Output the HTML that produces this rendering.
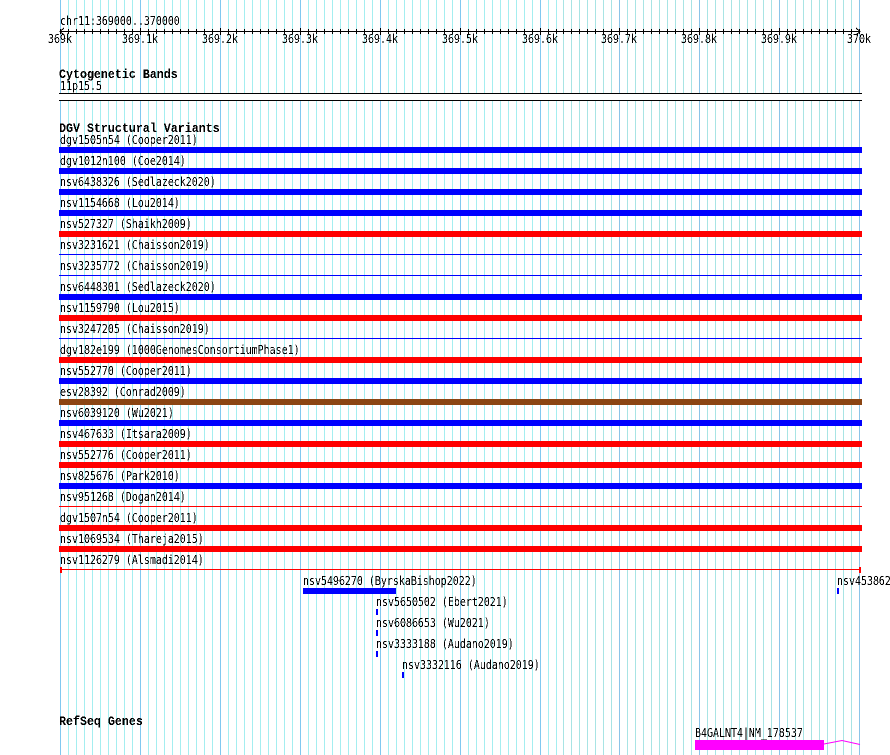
<!DOCTYPE html>
<html><head><meta charset="utf-8"><title>chr11:369000..370000</title>
<style>
html,body{margin:0;padding:0;background:#fff;width:890px;height:755px;overflow:hidden}
svg{display:block}
text{font-family:"DejaVu Sans Mono",monospace;font-size:12px;fill:#000}
.b{font-family:"Liberation Mono",monospace;font-size:13px;font-weight:bold}
</style></head><body>
<svg width="890" height="755" viewBox="0 0 890 755" xmlns="http://www.w3.org/2000/svg" shape-rendering="crispEdges">
<defs>
<filter id="t" x="0" y="0" width="100%" height="100%" color-interpolation-filters="sRGB">
<feComponentTransfer><feFuncA type="discrete" tableValues="0 1"/></feComponentTransfer>
</filter>
<path id="b" fill="none" d="M.5 0v755m8-755v755m8-755v755m8-755v755m8-755v755m8-755v755m8-755v755m8-755v755m8-755v755"/>
<path id="c" fill="none" d="M.5 29v5m8-5v5m8-5v5m8-5v5m8-5v5m8-5v5m8-5v5m8-5v5m8-5v5m8-5v5"/>
</defs>
<rect width="890" height="755" fill="#fff"/>
<g stroke="#a4eef0" stroke-width="1">
<use href="#b" x="68"/><use href="#b" x="148"/><use href="#b" x="228"/><use href="#b" x="308"/><use href="#b" x="388"/><use href="#b" x="468"/>
<path d="M548.5 0v755M556.5 0v755" fill="none"/>
</g>
<g stroke="#a8e4e4" stroke-width="1">
<use href="#b" x="627"/><use href="#b" x="707"/><use href="#b" x="787"/>
<path d="M563.5 0v755M571.5 0v755M579.5 0v755M587.5 0v755M595.5 0v755M603.5 0v755M611.5 0v755" fill="none"/>
</g>
<path stroke="#80c8f0" stroke-width="1" fill="none" d="M60.5 0v755M140.5 0v755M220.5 0v755M300.5 0v755M380.5 0v755M460.5 0v755M540.5 0v755"/>
<path stroke="#8cc4e8" stroke-width="1" fill="none" d="M619.5 0v755M699.5 0v755M779.5 0v755M859.5 0v755"/>

<!-- ruler -->
<rect x="60" y="31" width="800" height="1" fill="#000"/>
<g stroke="#000" stroke-width="1">
<use href="#c" x="60"/><use href="#c" x="140"/><use href="#c" x="220"/><use href="#c" x="300"/><use href="#c" x="380"/><use href="#c" x="460"/>
<use href="#c" x="619"/><use href="#c" x="699"/><use href="#c" x="779"/>
<path fill="none" d="M540.5 29v5M548.5 29v5M556.5 29v5M563.5 29v5M571.5 29v5M579.5 29v5M587.5 29v5M595.5 29v5M603.5 29v5M611.5 29v5M859.5 29v5"/>
<path fill="none" d="M140.5 28v7M220.5 28v7M300.5 28v7M380.5 28v7M460.5 28v7M540.5 28v7M619.5 28v7M699.5 28v7M779.5 28v7"/>
</g>
<path d="M64 28L60 31.5L64 35M856 28L860 31.5L856 35" fill="none" stroke="#000" shape-rendering="crispEdges"/>

<!-- cytoband -->
<rect x="59" y="93" width="803" height="8" fill="#fff"/>
<rect x="59" y="93" width="803" height="1" fill="#000"/>
<rect x="59" y="100" width="803" height="1" fill="#000"/>

<!-- variant bars -->
<rect x="59" y="147" width="803" height="6" fill="#00f"/>
<rect x="59" y="168" width="803" height="6" fill="#00f"/>
<rect x="59" y="189" width="803" height="6" fill="#00f"/>
<rect x="59" y="210" width="803" height="6" fill="#00f"/>
<rect x="59" y="231" width="803" height="6" fill="#f00"/>
<rect x="59" y="254" width="803" height="1" fill="#00f"/>
<rect x="59" y="275" width="803" height="1" fill="#00f"/>
<rect x="59" y="294" width="803" height="6" fill="#00f"/>
<rect x="59" y="315" width="803" height="6" fill="#f00"/>
<rect x="59" y="338" width="803" height="1" fill="#00f"/>
<rect x="59" y="357" width="803" height="6" fill="#f00"/>
<rect x="59" y="378" width="803" height="6" fill="#00f"/>
<rect x="59" y="399" width="803" height="6" fill="#8b4513"/>
<rect x="59" y="420" width="803" height="6" fill="#00f"/>
<rect x="59" y="441" width="803" height="6" fill="#f00"/>
<rect x="59" y="462" width="803" height="6" fill="#f00"/>
<rect x="59" y="483" width="803" height="6" fill="#00f"/>
<rect x="59" y="506" width="803" height="1" fill="#f00"/>
<rect x="59" y="525" width="803" height="6" fill="#f00"/>
<rect x="59" y="546" width="803" height="6" fill="#f00"/>
<rect x="60" y="569" width="801" height="1" fill="#f00"/>
<rect x="60" y="567" width="2" height="6" fill="#f00"/>
<rect x="859" y="567" width="2" height="6" fill="#f00"/>

<!-- lower marks -->
<rect x="303" y="588" width="93" height="6" fill="#00f"/>
<rect x="837" y="588" width="2" height="6" fill="#00f"/>
<rect x="376" y="609" width="2" height="6" fill="#00f"/>
<rect x="376" y="630" width="2" height="6" fill="#00f"/>
<rect x="376" y="651" width="2" height="6" fill="#00f"/>
<rect x="402" y="672" width="2" height="6" fill="#00f"/>

<!-- gene -->
<rect x="695" y="740" width="129" height="10" fill="#f0f"/>
<path d="M824 744L842 740.5L860 744.5" fill="none" stroke="#f0f" stroke-width="1" shape-rendering="auto"/>

<g filter="url(#t)">
<text transform="translate(60,25) scale(.83,1)">chr11:369000..370000</text>
<text transform="translate(48,43) scale(.83,1)">369k</text>
<text transform="translate(122,43) scale(.83,1)">369.1k</text>
<text transform="translate(202,43) scale(.83,1)">369.2k</text>
<text transform="translate(282,43) scale(.83,1)">369.3k</text>
<text transform="translate(362,43) scale(.83,1)">369.4k</text>
<text transform="translate(442,43) scale(.83,1)">369.5k</text>
<text transform="translate(522,43) scale(.83,1)">369.6k</text>
<text transform="translate(601,43) scale(.83,1)">369.7k</text>
<text transform="translate(681,43) scale(.83,1)">369.8k</text>
<text transform="translate(761,43) scale(.83,1)">369.9k</text>
<text transform="translate(847,43) scale(.83,1)">370k</text>

<text class="b" transform="translate(59,78) scale(.897,1)">Cytogenetic Bands</text>
<text transform="translate(60,90) scale(.83,1)">11p15.5</text>
<text class="b" transform="translate(59,132) scale(.897,1)">DGV Structural Variants</text>

<text transform="translate(60,144) scale(.83,1)">dgv1505n54 (Cooper2011)</text>
<text transform="translate(60,165) scale(.83,1)">dgv1012n100 (Coe2014)</text>
<text transform="translate(60,186) scale(.83,1)">nsv6438326 (Sedlazeck2020)</text>
<text transform="translate(60,207) scale(.83,1)">nsv1154668 (Lou2014)</text>
<text transform="translate(60,228) scale(.83,1)">nsv527327 (Shaikh2009)</text>
<text transform="translate(60,249) scale(.83,1)">nsv3231621 (Chaisson2019)</text>
<text transform="translate(60,270) scale(.83,1)">nsv3235772 (Chaisson2019)</text>
<text transform="translate(60,291) scale(.83,1)">nsv6448301 (Sedlazeck2020)</text>
<text transform="translate(60,312) scale(.83,1)">nsv1159790 (Lou2015)</text>
<text transform="translate(60,333) scale(.83,1)">nsv3247205 (Chaisson2019)</text>
<text transform="translate(60,354) scale(.83,1)">dgv182e199 (1000GenomesConsortiumPhase1)</text>
<text transform="translate(60,375) scale(.83,1)">nsv552770 (Cooper2011)</text>
<text transform="translate(60,396) scale(.83,1)">esv28392 (Conrad2009)</text>
<text transform="translate(60,417) scale(.83,1)">nsv6039120 (Wu2021)</text>
<text transform="translate(60,438) scale(.83,1)">nsv467633 (Itsara2009)</text>
<text transform="translate(60,459) scale(.83,1)">nsv552776 (Cooper2011)</text>
<text transform="translate(60,480) scale(.83,1)">nsv825676 (Park2010)</text>
<text transform="translate(60,501) scale(.83,1)">nsv951268 (Dogan2014)</text>
<text transform="translate(60,522) scale(.83,1)">dgv1507n54 (Cooper2011)</text>
<text transform="translate(60,543) scale(.83,1)">nsv1069534 (Thareja2015)</text>
<text transform="translate(60,564) scale(.83,1)">nsv1126279 (Alsmadi2014)</text>

<text transform="translate(303,585) scale(.83,1)">nsv5496270 (ByrskaBishop2022)</text>
<text transform="translate(837,585) scale(.83,1)">nsv453862</text>
<text transform="translate(376,606) scale(.83,1)">nsv5650502 (Ebert2021)</text>
<text transform="translate(376,627) scale(.83,1)">nsv6086653 (Wu2021)</text>
<text transform="translate(376,648) scale(.83,1)">nsv3333188 (Audano2019)</text>
<text transform="translate(402,669) scale(.83,1)">nsv3332116 (Audano2019)</text>

<text class="b" transform="translate(59,725) scale(.897,1)">RefSeq Genes</text>
<text transform="translate(695,737) scale(.83,1)">B4GALNT4|NM_178537</text>
</g>
</svg>
</body></html>
